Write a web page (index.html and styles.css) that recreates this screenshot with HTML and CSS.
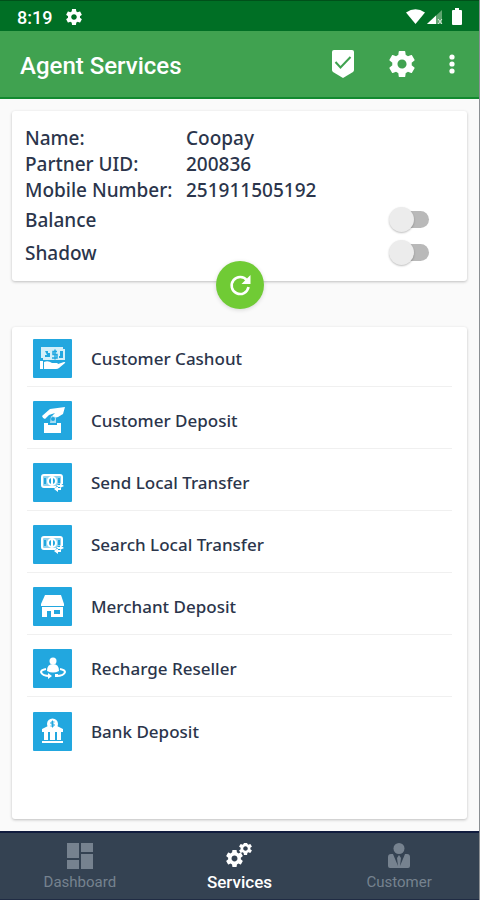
FILE: index.html
```html
<!DOCTYPE html>
<html lang="en">
<head>
<meta charset="utf-8">
<meta name="viewport" content="width=device-width, initial-scale=1">
<title>Agent Services</title>
<link rel="stylesheet" href="styles.css">
</head>
<body>
<svg class="defs" aria-hidden="true">
  <symbol id="gear" viewBox="2 2 20 20"><path d="M19.43 12.98c.04-.32.07-.64.07-.98s-.03-.66-.07-.98l2.11-1.65c.19-.15.24-.42.12-.64l-2-3.46c-.12-.22-.39-.3-.61-.22l-2.49 1c-.52-.4-1.08-.73-1.69-.98l-.38-2.65C14.46 2.18 14.25 2 14 2h-4c-.25 0-.46.18-.49.42l-.38 2.65c-.61.25-1.17.59-1.69.98l-2.49-1c-.23-.09-.49 0-.61.22l-2 3.46c-.13.22-.07.49.12.64l2.11 1.65c-.04.32-.07.65-.07.98s.03.66.07.98l-2.11 1.65c-.19.15-.24.42-.12.64l2 3.46c.12.22.39.3.61.22l2.49-1c.52.4 1.08.73 1.69.98l.38 2.65c.03.24.24.42.49.42h4c.25 0 .46-.18.49-.42l.38-2.65c.61-.25 1.17-.59 1.69-.98l2.49 1c.23.09.49 0 .61-.22l2-3.46c.12-.22.07-.49-.12-.64l-2.11-1.65zM12 15.5c-1.93 0-3.5-1.57-3.5-3.5s1.57-3.500 3.500-3.500 3.500 1.570 3.500 3.500-1.570 3.500-3.500 3.500z"/></symbol>
  <symbol id="transfer" viewBox="0 0 39 39">
    <rect x="9" y="12" width="20" height="12" rx="2" fill="#8fd3ef" stroke="#fff" stroke-width="2"/>
    <circle cx="19" cy="18" r="4" fill="#22a7df" stroke="#fff" stroke-width="2"/>
    <path d="M19 15v6" stroke="#fff" stroke-width="2"/>
    <path d="M12 15v6M26 15v5" stroke="#22a7df" stroke-width="2"/>
    <path d="M21 27h11v-6h-7z" fill="#22a7df"/>
    <path d="M24 22h3v-2l4 3-4 2v-1h-3zM28 25h-3v-2l-4 3 4 3v-2h3z" fill="#fff"/>
  </symbol>
</svg>
<div class="app">
  <div class="status">
    <span class="time">8:19</span>
    <svg class="status-gear" fill="#fff"><use href="#gear"/></svg>
    <svg class="signals" viewBox="0 0 56 18" aria-hidden="true">
      <path d="M0 4.500Q9.500-2 19 4.500L9.500 16z" fill="#fff"/>
      <path d="M36 2v14H21z" fill="#5fa570"/><path d="M30 7.500V16h-9z" fill="#fff"/>
      <path d="M32 11l4 5M36 11l-4 5" stroke="#dceee0"/>
      <path d="M47 2h2V0h4v2h2q1 0 1 1v13q0 1-1 1h-8q-1 0-1-1V3q0-1 1-1z" fill="#fff"/>
    </svg>
  </div>
  <header class="bar">
    <h1>Agent Services</h1>
    <button class="icon-btn" aria-label="Verified">
      <svg width="24" height="28" viewBox="0 0 24 28"><path d="M3 0h18q2 0 2 2v18q0 1-1 2l-10 6-10-6q-1-1-1-2V2q0-2 2-2z" fill="#fff"/><path d="M4.500 12l5 5.500L19.500 7" fill="none" stroke="#40a250" stroke-width="2"/></svg>
    </button>
    <button class="icon-btn" aria-label="Settings"><svg width="26" height="26" fill="#fff"><use href="#gear"/></svg></button>
    <button class="icon-btn" aria-label="More">
      <svg width="6" height="20" viewBox="0 0 6 20" fill="#fff"><circle cx="3" cy="3" r="2.600"/><circle cx="3" cy="10" r="2.600"/><circle cx="3" cy="17" r="2.600"/></svg>
    </button>
  </header>
  <main>
    <section class="card info">
      <dl>
        <dt>Name:</dt><dd>Coopay</dd>
        <dt>Partner UID:</dt><dd>200836</dd>
        <dt>Mobile Number:</dt><dd>251911505192</dd>
      </dl>
      <div class="toggle"><label for="balance">Balance</label><input type="checkbox" id="balance"></div>
      <div class="toggle"><label for="shadow">Shadow</label><input type="checkbox" id="shadow"></div>
      <button class="refresh" aria-label="Refresh">
        <svg width="24" height="24" viewBox="0 0 24 24"><path d="M19 7.500A8.500 8.500 0 1 0 20.500 14" fill="none" stroke="#fff" stroke-width="2.600"/><path d="M22.500 2v9h-9z" fill="#fff"/></svg>
      </button>
    </section>
    <nav class="card list" aria-label="Services">
      <a href="#"><svg class="tile" viewBox="0 0 39 39">
        <path d="M8 8h22v2h2v11H10v-2H8z" fill="#d5eff9"/>
        <path d="M12 12h3v2h2v4h-5v-2h2zM27 12h3v7h-4v-2h1z" fill="#22a7df"/>
        <path d="M24 12.500h-4v3h4v3.500h-5M22 10.500v10" fill="none" stroke="#22a7df" stroke-width="1.500"/>
        <path d="M7 22h3v8H7zM11 23q4-2 8 1h5q2 1 0 2h-2l9-3q2 0 1 1l-6 5q-1 1-3 1H11z" fill="#fff"/>
      </svg>Customer Cashout</a>
      <a href="#"><svg class="tile" viewBox="0 0 39 39">
        <path d="M9 15l8-7 15-2-2 7-5 3-4 1-2-2 3-3-6 2-4 4q-2 0-3-3z" fill="#fff"/>
        <path d="M18 15l5 1v6h-6z" fill="#a8ddf3"/><circle cx="20" cy="18" r="2" fill="#22a7df"/>
        <path d="M11 22h4v2h9v-2h4v10H11z" fill="#fff"/>
      </svg>Customer Deposit</a>
      <a href="#"><svg class="tile"><use href="#transfer"/></svg>Send Local Transfer</a>
      <a href="#"><svg class="tile"><use href="#transfer"/></svg>Search Local Transfer</a>
      <a href="#"><svg class="tile" viewBox="0 0 39 39">
        <path d="M12 8h16l3 9v2H8v-2z" fill="#fff"/>
        <path d="M9 20h21v10H18v-6h-4v6H9z" fill="#fff"/><path d="M21 23h6v4h-6z" fill="#22a7df"/>
      </svg>Merchant Deposit</a>
      <a href="#"><svg class="tile" viewBox="0 0 39 39">
        <circle cx="20" cy="12" r="3.500" fill="#fff"/><path d="M14 22q0-7 6-7t6 7q-6 3-12 0z" fill="#fff"/>
        <path d="M13 20q-5 1-5 3 1 4 9 4M27 20q5 1 5 3-1 4-9 4" fill="none" stroke="#fff" stroke-width="2"/>
        <path d="M15 24l4 3-4 3zM22 25h3v3h-3z" fill="#fff"/>
      </svg>Recharge Reseller</a>
      <a href="#"><svg class="tile" viewBox="0 0 39 39">
        <path d="M9 17l6-3h9l6 3v3H9zM11 20h4v8h-4zM17 20h5v8h-5zM24 20h4v8h-4zM9 29h21v2H9z" fill="#fff"/>
        <circle cx="19.500" cy="12" r="5.500" fill="#fff"/>
        <path d="M21.500 10h-3.500v2h3v2h-3.500M19.500 8.500v7" fill="none" stroke="#22a7df"/>
      </svg>Bank Deposit</a>
    </nav>
  </main>
  <nav class="tabs" aria-label="Main">
    <a href="#"><svg width="26" height="26" viewBox="0 0 26 26" fill="currentColor"><path d="M0 0h12v15H0zM14 0h12v9H14zM0 17h12v9H0zM14 11h12v15H14z"/></svg>Dashboard</a>
    <a href="#" class="active" aria-current="page"><svg width="26" height="26" viewBox="0 0 26 26" fill="currentColor"><use href="#gear" x="0" y="7" width="17" height="17"/><use href="#gear" x="13" y="-1" width="13" height="13"/></svg>Services</a>
    <a href="#"><svg width="26" height="26" viewBox="0 0 26 26" fill="currentColor"><circle cx="13" cy="5.500" r="5.500"/><path d="M5 11h2l5 12-1-8 2-3 2 3-1 8 5-12h2q3 0 3 3v9q0 2-2 2H4q-2 0-2-2v-9q0-3 3-3z"/></svg>Customer</a>
  </nav>
</div>
</body>
</html>
```
FILE: styles.css
```css
* { box-sizing: border-box; }
body { margin: 0; font-family: "Noto Sans", "Open Sans", sans-serif; color: #2b354b; }
.defs { position: absolute; width: 0; height: 0; }
button { border: 0; padding: 0; background: none; }
a { color: inherit; text-decoration: none; }
.app {
  min-height: 100vh;
  display: flex;
  flex-direction: column;
  background: #fafafa;
  border-right: 1px solid #8b8f93;
}
.status {
  height: 31px;
  padding: 2px 17px 0 17px;
  display: flex;
  align-items: center;
  background: #006f25;
  border-top: 1px solid #00501a;
  color: #fff;
  font: 500 18px Roboto, sans-serif;
}
.status-gear { width: 16px; height: 16px; margin-left: 14px; }
.signals { width: 56px; height: 18px; margin-left: auto; }
.bar {
  height: 68px;
  padding: 0 24px 0 20px;
  display: flex;
  align-items: center;
  background: #40a250;
  border-bottom: 2px solid #12892f;
}
h1 { margin: 0; flex: 1; color: #fff; font: 500 24px/32px Roboto, sans-serif; padding-top: 4px; }
.icon-btn { display: flex; margin-left: 34px; }
main { flex: 1; display: flex; flex-direction: column; gap: 46px; padding: 12px; }
.card { background: #fff; border-radius: 3px; box-shadow: 0 1px 3px rgba(0, 0, 0, .24); }
.info { position: relative; padding: 14px 38px 12px 13px; font-size: 19px; font-weight: 500; line-height: 26px; }
dl { margin: 0; display: grid; grid-template-columns: 161px 1fr; }
dd { margin: 0; }
dt { white-space: nowrap; }
.toggle { display: flex; align-items: center; justify-content: space-between; height: 33px; }
.toggle input {
  appearance: none;
  position: relative;
  margin: 0;
  width: 40px;
  height: 26px;
  display: flex;
  align-items: center;
}
.toggle input::before {
  content: "";
  width: 34px;
  height: 17px;
  margin-left: 6px;
  border-radius: 9px;
  background: #b9b9b9;
}
.toggle input::after {
  content: "";
  position: absolute;
  left: 0;
  width: 25px;
  height: 25px;
  border-radius: 50%;
  background: #ececec;
  box-shadow: 0 1px 2px rgba(0, 0, 0, .25);
}
.refresh {
  position: absolute;
  left: 50%;
  bottom: -28px;
  width: 48px;
  height: 48px;
  margin-left: -24px;
  display: grid;
  place-items: center;
  border-radius: 50%;
  background: #70cb35;
  box-shadow: 0 1px 4px rgba(0, 0, 0, .15);
}
.list { flex: 1; padding: 0 15px; }
.list a {
  display: flex;
  align-items: center;
  gap: 19px;
  height: 62px;
  padding: 6px 0 0 6px;
  border-bottom: 1px solid #f0f0f0;
  font-size: 17px;
  font-weight: 500;
}
.list a:first-child { height: 60px; padding-top: 4px; }
.list a:last-child { border-bottom: 0; }
.tile { width: 39px; height: 39px; border-radius: 1px; background: #22a7df; }
.tabs {
  height: 69px;
  display: grid;
  grid-template-columns: repeat(3, 1fr);
  background: #344252;
  border-top: 2px solid #101c3e;
  border-bottom: 1px solid #202c44;
  color: #76828f;
  font: 400 15px/20px Roboto, sans-serif;
}
.tabs a { display: flex; flex-direction: column; align-items: center; gap: 3px; padding-top: 10px; }
.tabs .active { color: #fff; font-size: 17px; font-weight: 500; }
```
